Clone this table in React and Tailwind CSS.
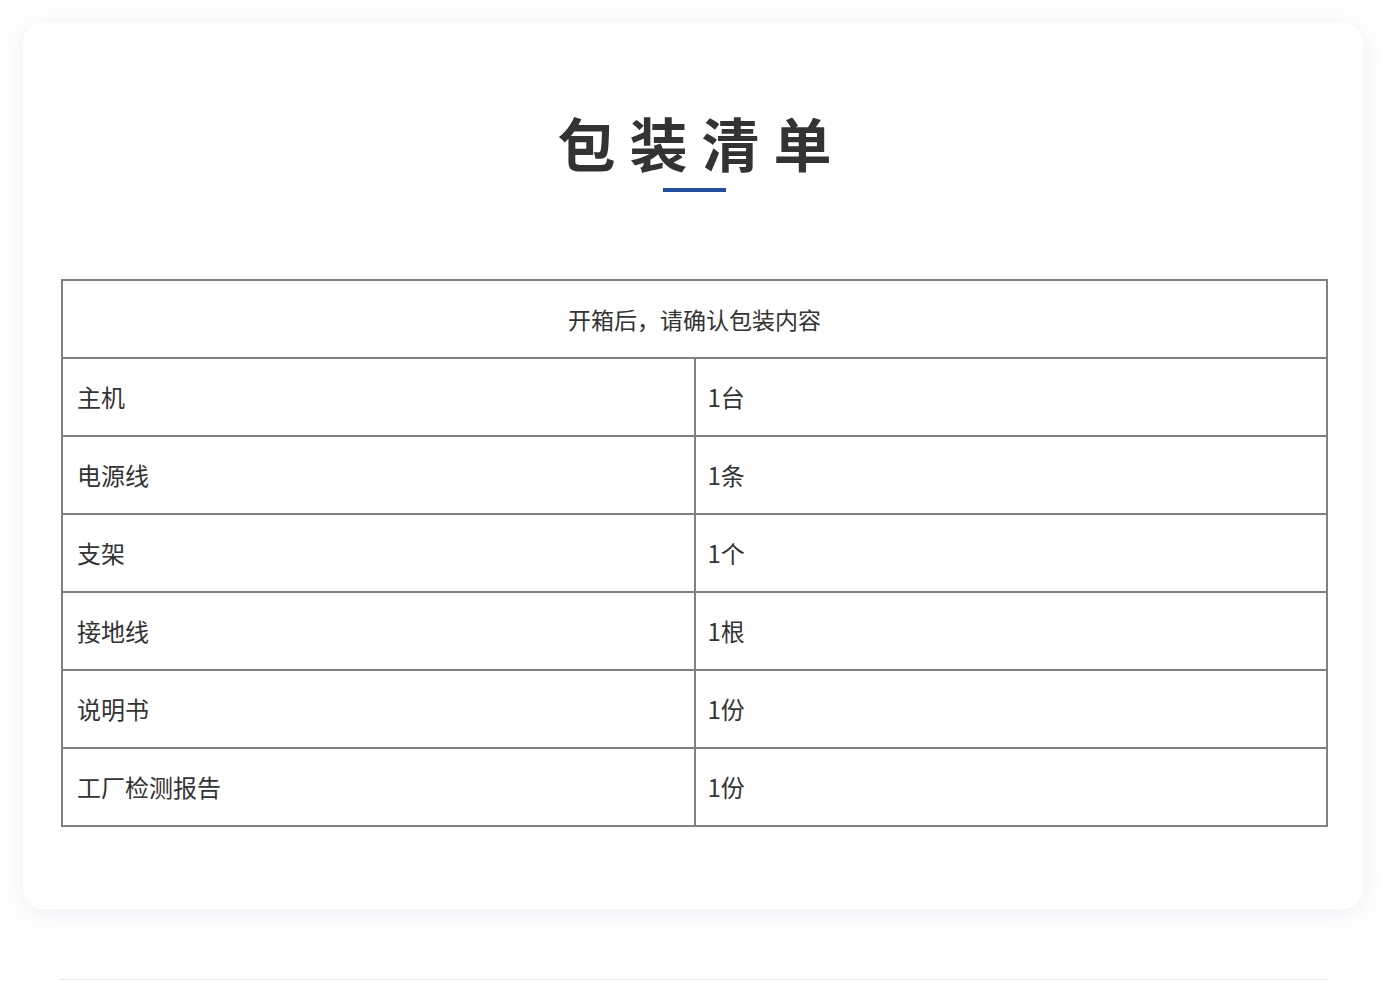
import React from 'react';

const items = [
  { name: '主机', qty: '1台' },
  { name: '电源线', qty: '1条' },
  { name: '支架', qty: '1个' },
  { name: '接地线', qty: '1根' },
  { name: '说明书', qty: '1份' },
  { name: '工厂检测报告', qty: '1份' },
];

const font = { fontFamily: '"Noto Sans CJK SC", "Noto Sans", sans-serif' };

const App = () => {
  return (
    <div className="min-h-screen bg-white pt-[23px] px-[23px] overflow-hidden" style={font}>
      {/* Card */}
      <div className="bg-white rounded-[20px] shadow-[0_4px_28px_rgba(40,70,130,0.09)] pl-[38px] pr-[35px] pt-[90px] pb-[82px]">
        <div className="flex flex-col items-center">
          <h2 className="text-[58px] leading-[58px] font-bold tracking-[14px] pl-[14px] text-[#333]">包装清单</h2>
          <div className="mt-[17px] w-[63px] h-[4px] bg-[#1f4fa8]" />
        </div>

        <table className="mt-[87px] w-full table-fixed border-collapse text-[#333]">
          <tbody>
            <tr className="h-[78px]">
              <td colSpan={2} className="border-2 border-[#808080] text-center text-[23px]">
                开箱后，请确认包装内容
              </td>
            </tr>
            {items.map((item) => (
              <tr key={item.name} className="h-[78px]">
                <td className="border-2 border-[#808080] pl-[14px] pr-4 text-[24px]">{item.name}</td>
                <td className="border-2 border-[#808080] px-3 text-[24px]">{item.qty}</td>
              </tr>
            ))}
          </tbody>
        </table>
      </div>

      {/* next section */}
      <div className="mt-[70px] ml-[37px] mr-[35px] border-t border-[#e6e6e6] h-8" />
    </div>
  );
};

export default App;
